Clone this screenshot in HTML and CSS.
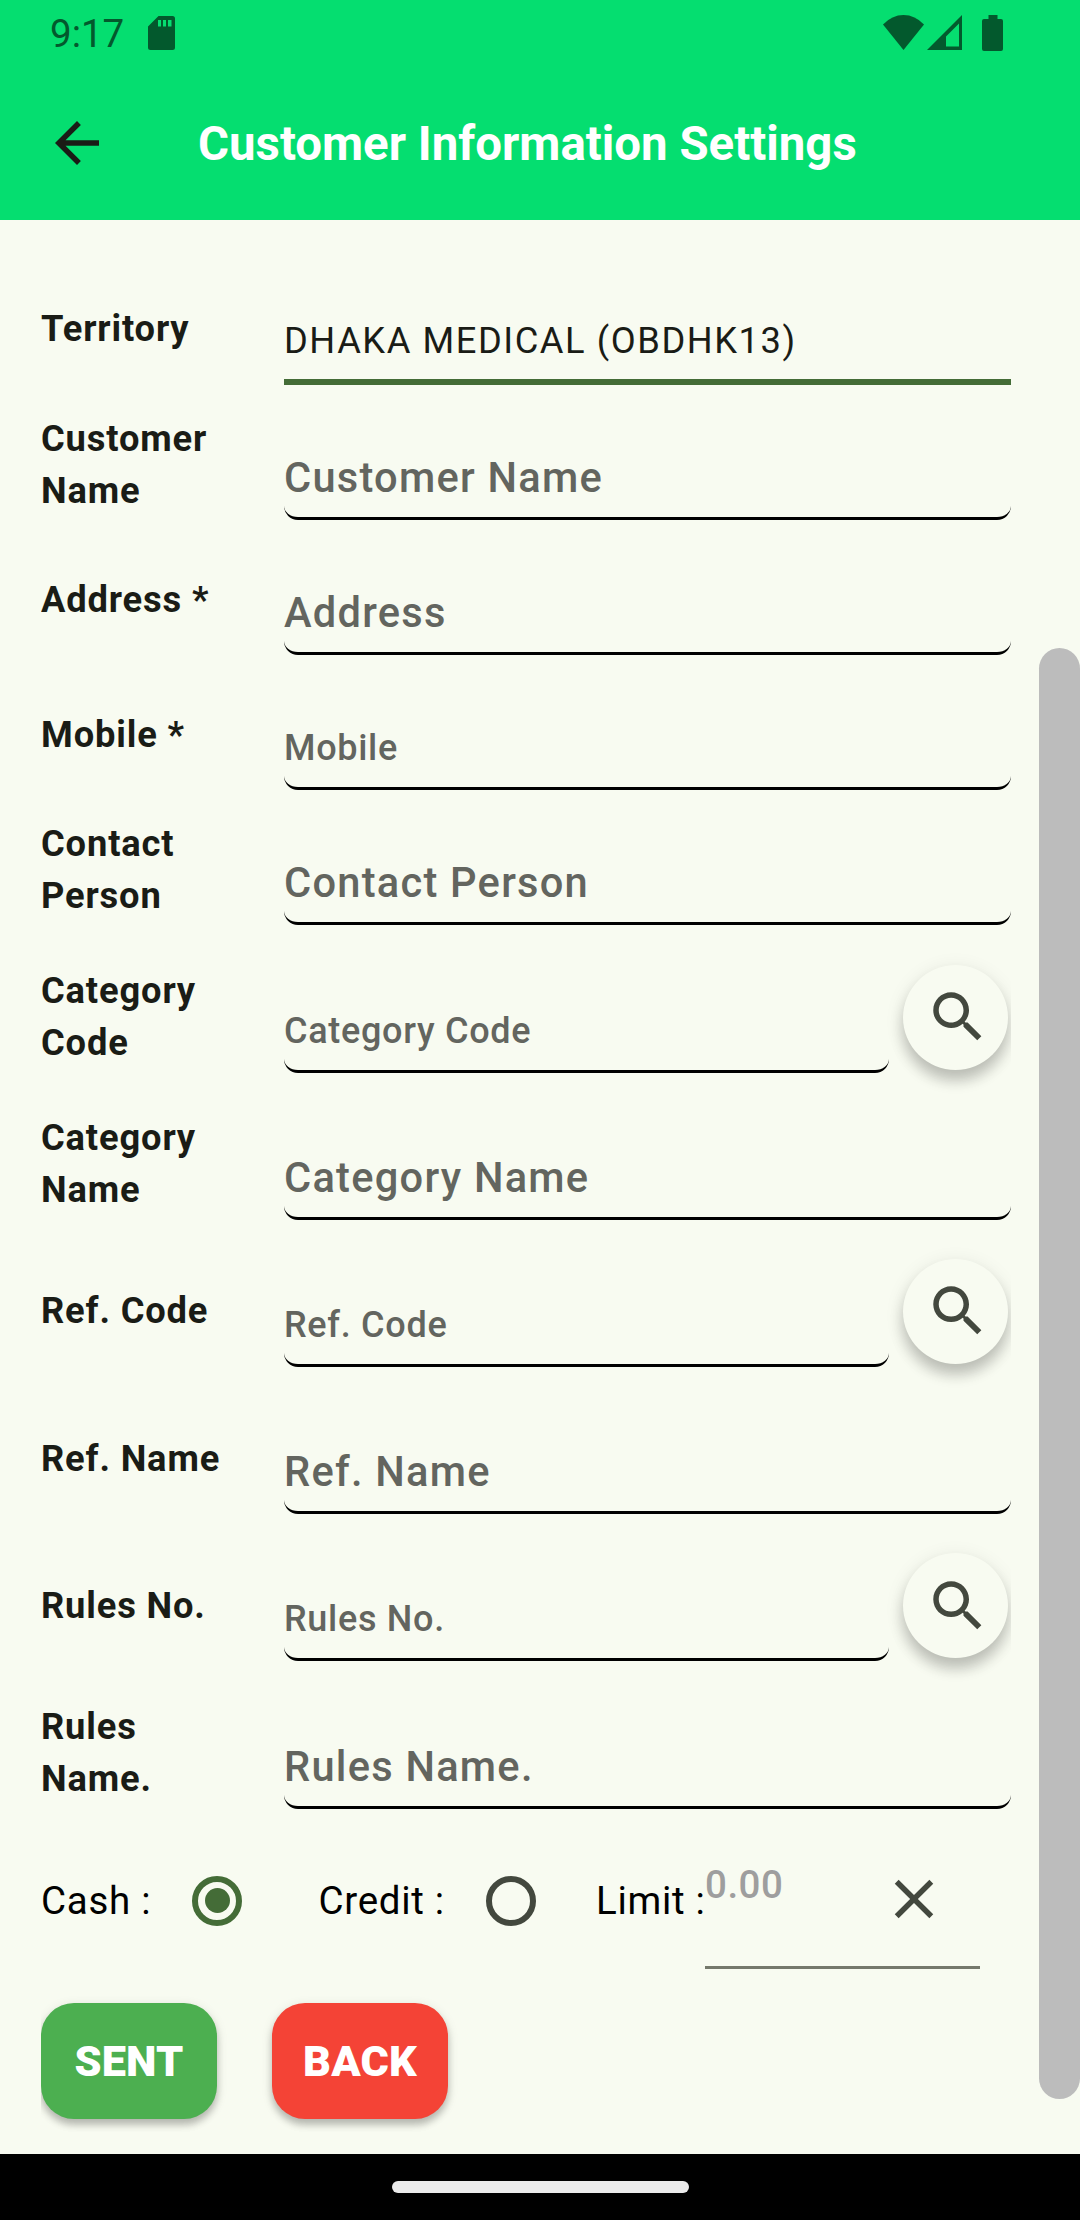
FILE: index.html
```html
<!DOCTYPE html>
<html lang="en">
<head>
<meta charset="utf-8">
<title>Customer Information Settings</title>
<link rel="stylesheet" href="styles.css">
</head>
<body>
<svg class="sprite" aria-hidden="true">
  <symbol id="search" viewBox="0 0 24 24"><path d="M15.5 14h-.79l-.28-.27C15.41 12.59 16 11.11 16 9.5 16 5.91 13.09 3 9.5 3S3 5.91 3 9.5 5.91 16 9.5 16c1.61 0 3.09-.59 4.23-1.57l.27.28v.79l5 4.99L20.49 19l-4.99-5zm-6 0C7.01 14 5 11.99 5 9.5S7.01 5 9.5 5 14 7.01 14 9.5 11.99 14 9.5 14z"/></symbol>
</svg>
<div class="screen">
  <header class="header">
    <div class="status">
      <span class="time">9:17</span>
      <svg class="sd" viewBox="0 0 27 34"><path fill-rule="evenodd" d="M10.500 0H24.500Q27 0 27 2.500V31.500Q27 34 24.500 34H2.500Q0 34 0 31.500V10.500ZM10 4V10.500H13V4ZM15 4V10.500H18V4ZM20 4V10.500H23.500V4Z"/></svg>
      <svg class="wifi" viewBox="0 0 41 35"><path d="M0 9.500Q9 0 20.500 0T41 9.500L20.500 35Z"/></svg>
      <svg class="signal" viewBox="0 0 35 35"><path fill-rule="evenodd" d="M35 0V35H0ZM32 8.500L19 21.500V31.500H32Z"/></svg>
      <svg class="battery" viewBox="0 0 21 36"><path d="M6.500 0H15.500V4H19Q21 4 21 6V34Q21 36 19 36H2Q0 36 0 34V6Q0 4 2 4H6.500Z"/></svg>
    </div>
    <div class="appbar">
      <svg class="icon back-icon" viewBox="0 0 24 24"><path d="M20 11H7.830l5.590-5.590L12 4l-8 8 8 8 1.410-1.410L7.830 13H20v-2z"/></svg>
      <h1 class="title">Customer Information Settings</h1>
    </div>
  </header>

  <main class="content">
    <div class="form">
      <div class="row row-first"><span class="label">Territory</span><div class="field field-value">DHAKA MEDICAL (OBDHK13)</div></div>
      <div class="row"><span class="label">Customer Name</span><div class="field">Customer Name</div></div>
      <div class="row"><span class="label">Address *</span><div class="field">Address</div></div>
      <div class="row"><span class="label">Mobile *</span><div class="field field-small">Mobile</div></div>
      <div class="row"><span class="label">Contact Person</span><div class="field">Contact Person</div></div>
      <div class="row row-tall"><span class="label">Category Code</span><div class="field field-small">Category Code</div><button class="search"><svg class="icon"><use href="#search"/></svg></button></div>
      <div class="row row-tall"><span class="label">Category Name</span><div class="field">Category Name</div></div>
      <div class="row row-tall"><span class="label">Ref. Code</span><div class="field field-small">Ref. Code</div><button class="search"><svg class="icon"><use href="#search"/></svg></button></div>
      <div class="row row-tall"><span class="label">Ref. Name</span><div class="field">Ref. Name</div></div>
      <div class="row row-tall"><span class="label">Rules No.</span><div class="field field-small">Rules No.</div><button class="search"><svg class="icon"><use href="#search"/></svg></button></div>
      <div class="row row-tall"><span class="label">Rules Name.</span><div class="field">Rules Name.</div></div>
    </div>

    <div class="payment">
      <span class="pay-label cash">Cash :</span>
      <span class="radio radio-on"></span>
      <span class="pay-label credit">Credit :</span>
      <span class="radio"></span>
      <span class="pay-label limit">Limit :</span>
      <div class="limit-field">
        <span class="amount">0.00</span>
        <svg class="icon" viewBox="0 0 24 24"><path d="M19 6.410L17.590 5 12 10.590 6.410 5 5 6.410 10.590 12 5 17.590 6.410 19 12 13.410 17.590 19 19 17.590 13.410 12z"/></svg>
      </div>
    </div>

    <div class="actions">
      <button class="btn btn-sent">SENT</button>
      <button class="btn btn-back">BACK</button>
    </div>
    <div class="scrollbar"></div>
  </main>

  <footer class="navbar"><div class="pill"></div></footer>
</div>
</body>
</html>
```
FILE: styles.css
```css
* { box-sizing: border-box; }

body {
  margin: 0;
  font-family: Roboto, "Liberation Sans", sans-serif;
  background: #f8fbf1;
}

button { font-family: inherit; border: 0; padding: 0; }

.sprite { display: none; }

.screen {
  display: flex;
  flex-direction: column;
  width: 1080px;
  height: 2220px;
  overflow: hidden;
}

.icon { flex: none; width: 66px; height: 66px; fill: #43483e; }

/* Header */
.header { height: 220px; background: #05de70; }

.status {
  display: flex;
  align-items: flex-start;
  height: 66px;
  padding: 15px 77px 0 50px;
  fill: #03592d;
  color: #03592d;
}

.status svg { flex: none; }
.time { width: 98px; font-size: 38.5px; line-height: 38px; }
.sd { width: 27px; height: 34px; margin-top: 1px; }
.wifi { width: 41px; height: 35px; margin-left: auto; }
.signal { width: 35px; height: 35px; margin-left: 3px; }
.battery { width: 21px; height: 36px; margin-left: 20px; }

.appbar { display: flex; align-items: center; height: 154px; padding-left: 44px; }
.back-icon { fill: #1a1c16; }

.title {
  margin: 2px 0 0 88px;
  font-size: 47.4px;
  font-weight: 700;
  color: #fff;
  white-space: nowrap;
}

/* Form */
.content { position: relative; flex: 1; padding-left: 41px; }

.form { width: 970px; padding-top: 53px; }

.row {
  display: flex;
  align-items: center;
  height: 111px;
  margin-top: 24.1px;
  clip-path: inset(-20px 0 -30px 0);
}

.row-first { height: 112px; margin-top: 0; }
.row-tall { margin-top: 36.2px; }

.label {
  flex: none;
  width: 242.500px;
  padding-right: 50px;
  font-size: 36.3px;
  font-weight: 700;
  line-height: 52px;
  letter-spacing: 0.85px;
  color: #1a1c16;
}

.field {
  display: flex;
  flex: 1;
  align-items: flex-end;
  align-self: stretch;
  padding: 0 0 14px 0.5px;
  border-bottom: 3px solid #000;
  border-radius: 0 0 14px 14px;
  font-size: 41.6px;
  font-weight: 500;
  line-height: 50px;
  letter-spacing: 1.25px;
  color: #63655f;
  white-space: nowrap;
}

.field-small { font-size: 36px; letter-spacing: 0.7px; }

.field-value {
  padding-bottom: 13px;
  border-bottom: 6px solid #446c37;
  border-radius: 0;
  font-size: 36.3px;
  font-weight: 400;
  letter-spacing: 1.55px;
  color: #1a1c16;
}

.search {
  display: flex;
  flex: none;
  align-items: center;
  justify-content: center;
  width: 105px;
  height: 105px;
  margin: 0 3px 0 14px;
  padding-left: 5px;
  border-radius: 50%;
  background: #f8fbf1;
  box-shadow: 0 11px 14px rgba(0, 0, 0, 0.2), 0 4px 20px rgba(0, 0, 0, 0.09);
}

/* Payment */
.payment { display: flex; align-items: center; height: 136px; margin-top: 24px; }

.pay-label {
  flex: none;
  font-size: 38.5px;
  line-height: 52px;
  letter-spacing: 0.7px;
  color: #000;
  white-space: nowrap;
}

.cash { width: 151px; }
.credit { width: 167.500px; margin-left: 76.500px; }
.limit { width: 109px; margin-left: 60px; }

.radio {
  display: grid;
  place-items: center;
  flex: none;
  width: 50px;
  height: 50px;
  border: 6px solid #43483e;
  border-radius: 50%;
}

.radio-on { border-color: #446c37; }
.radio-on::after { content: ""; width: 25px; height: 25px; border-radius: 50%; background: #446c37; }

.limit-field {
  display: flex;
  align-items: center;
  justify-content: space-between;
  width: 275px;
  height: 136px;
  padding-right: 33px;
  border-bottom: 3px solid #75796c;
}

.amount { margin-top: -30px; font-size: 38.5px; font-weight: 500; letter-spacing: 0.5px; color: #9e9e9e; }

/* Actions */
.actions {
  display: flex;
  gap: 55px;
  width: 970px;
  margin-top: 34px;
  clip-path: inset(-10px 0 -30px 0);
}

.btn {
  width: 176px;
  height: 116px;
  padding-top: 2px;
  border-radius: 33px;
  font-size: 43.3px;
  font-weight: 900;
  letter-spacing: 0.2px;
  color: #fff;
  box-shadow: 0 6px 7px rgba(0, 0, 0, 0.2), 0 3px 12px rgba(0, 0, 0, 0.12);
}

.btn-sent { background: #4caf50; }
.btn-back { background: #f44336; }

.scrollbar {
  position: absolute;
  top: 428px;
  right: 0;
  width: 41px;
  height: 1451px;
  border-radius: 21px;
  background: #bcbcbc;
}

/* System navigation */
.navbar { display: grid; place-items: center; height: 66px; background: #000; }
.pill { width: 297px; height: 12px; border-radius: 6px; background: #ebebeb; }
```
